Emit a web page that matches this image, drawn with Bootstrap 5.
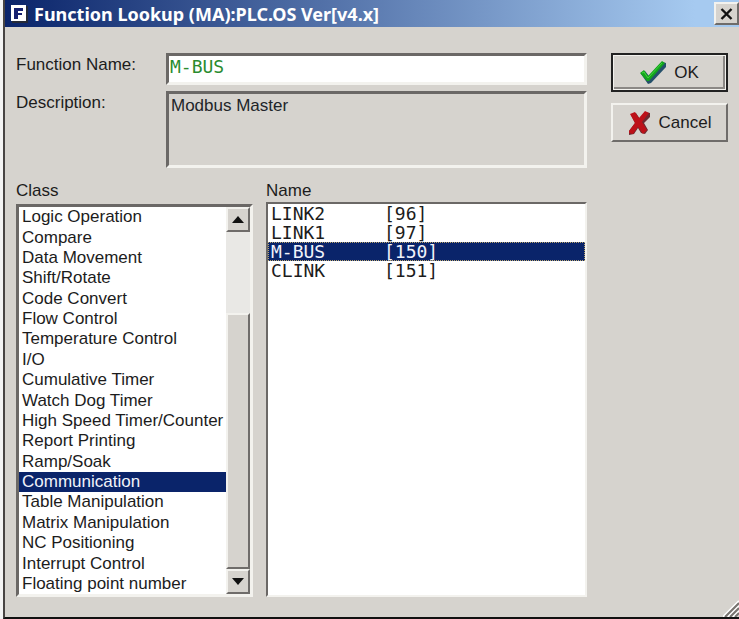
<!DOCTYPE html>
<html lang="en">
<head>
<meta charset="utf-8">
<meta name="viewport" content="width=device-width, initial-scale=1">
<title>Function Lookup</title>
<link href="https://cdn.jsdelivr.net/npm/bootstrap@5.3.0/dist/css/bootstrap.min.css" rel="stylesheet">
<style>
:root{--face:#d6d3ce;--navy:#0a246a;--dark:#6b6866;--light:#f3f2ee}
body{background:#f4f4f4;font-family:"Liberation Sans",Arial,sans-serif;font-size:17px;line-height:20px;color:#1c1c1c}
.dialog-window{background:var(--face);margin-left:3px;border-left:2px solid #484443;border-bottom:2px solid #111}
.title-strip{height:27px;padding-left:5px;background:linear-gradient(90deg,#0a246a,#a6caf0 94%);color:#fff}
.title-text{font:bold 18px/26px "Noto Sans",Tahoma,sans-serif}
.title-icon{margin-right:6px}
.raised{background:var(--face);border:2px solid;border-color:var(--light) #6f6c6a #6f6c6a var(--light);border-radius:0;color:#1c1c1c;padding:0}
.sunken{border:3px solid;border-color:var(--dark) var(--light) var(--light) var(--dark);border-radius:0}
.close-btn{width:25px;height:23px}
.dialog-body{padding:26px 11px 20px 11px;gap:24px}
.form-rows{display:grid;grid-template-columns:150px 1fr;row-gap:6px}
.form-rows label{padding-top:2px}
.name-input{height:32px;padding:0 1px 6px;color:#2a8c2f;background:#fff;font:18px/20px "DejaVu Sans Mono",monospace}
.name-input:focus{color:#2a8c2f;box-shadow:none;border-color:var(--dark) var(--light) var(--light) var(--dark)}
.desc-box{height:77px;padding:2px;background:var(--face);resize:none;font-size:17px;line-height:20px}
.lists{display:grid;grid-template-columns:237px 1fr;column-gap:13px;margin-top:11px}
.list-caption{height:25px;line-height:24px}
.name-caption{height:23px}
.name-frame{border-width:2px}
.pick{border-radius:0;gap:0;background:#fff}
.pick .list-group-item{border:0;background:#fff;color:#1c1c1c;padding:0 3px;white-space:nowrap;min-height:0}
.pick .list-group-item.active{background:var(--navy);color:#f1f3fa;margin:0}
.class-pick .list-group-item{line-height:20px}
.name-pick .list-group-item{font:18px/19px "DejaVu Sans Mono",monospace;height:19px}
.name-pick .list-group-item.active{outline:1px dotted #b9a56f;outline-offset:-1px}
.fn-name{width:113px}
.scroller{width:24px;background:#e9e8e5}
.arrow-btn{height:25px}
.scroll-gap{flex:82 1 0}
.scroll-thumb{flex:255 1 0}
.side-buttons{width:117px;gap:11px}
.side-buttons .btn{height:39px;font-size:17px}
.ok-btn{box-shadow:inset 0 0 0 1px var(--light),inset -3px -3px 0 #8b8885;border:2px solid #222}
.grip{right:0;bottom:0}
</style>
</head>
<body>
<main class="dialog-window min-vh-100 d-flex flex-column position-relative">
  <header class="title-strip d-flex align-items-center">
    <svg width="18" height="20" viewBox="0 0 18 20" aria-hidden="true" class="title-icon"><path d="M2 2h16v17H2z" fill="#252a38"/><path d="M1 1h15v16H1z" fill="#fff"/><path d="M4 4h9v3H8v2h4v2H8v4H4z" fill="#15206f"/></svg>
    <h1 class="title-text m-0 flex-grow-1">Function Lookup (MA):PLC.OS Ver[v4.x]</h1>
    <button type="button" class="btn raised close-btn d-flex align-items-center justify-content-center" aria-label="Close"><svg width="13" height="12" viewBox="0 0 13 12"><path d="M1.500 1l10 10M11.500 1l-10 10" stroke="#111" stroke-width="2.400"/></svg></button>
  </header>
  <form class="dialog-body d-flex flex-grow-1">
    <div class="flex-grow-1 d-flex flex-column">
      <div class="form-rows">
        <label for="fn">Function Name:</label>
        <input id="fn" type="text" class="form-control sunken name-input" value="M-BUS">
        <label for="desc">Description:</label>
        <textarea id="desc" class="form-control sunken desc-box" readonly>Modbus Master</textarea>
      </div>
      <div class="lists flex-grow-1">
        <section class="d-flex flex-column">
          <div class="list-caption" id="class-label">Class</div>
          <div class="sunken d-flex flex-grow-1 bg-white">
            <div class="list-group pick class-pick flex-grow-1" aria-labelledby="class-label">
              <button type="button" class="list-group-item flex-fill text-start">Logic Operation</button>
              <button type="button" class="list-group-item flex-fill text-start">Compare</button>
              <button type="button" class="list-group-item flex-fill text-start">Data Movement</button>
              <button type="button" class="list-group-item flex-fill text-start">Shift/Rotate</button>
              <button type="button" class="list-group-item flex-fill text-start">Code Convert</button>
              <button type="button" class="list-group-item flex-fill text-start">Flow Control</button>
              <button type="button" class="list-group-item flex-fill text-start">Temperature Control</button>
              <button type="button" class="list-group-item flex-fill text-start">I/O</button>
              <button type="button" class="list-group-item flex-fill text-start">Cumulative Timer</button>
              <button type="button" class="list-group-item flex-fill text-start">Watch Dog Timer</button>
              <button type="button" class="list-group-item flex-fill text-start">High Speed Timer/Counter</button>
              <button type="button" class="list-group-item flex-fill text-start">Report Printing</button>
              <button type="button" class="list-group-item flex-fill text-start">Ramp/Soak</button>
              <button type="button" class="list-group-item flex-fill text-start active">Communication</button>
              <button type="button" class="list-group-item flex-fill text-start">Table Manipulation</button>
              <button type="button" class="list-group-item flex-fill text-start">Matrix Manipulation</button>
              <button type="button" class="list-group-item flex-fill text-start">NC Positioning</button>
              <button type="button" class="list-group-item flex-fill text-start">Interrupt Control</button>
              <button type="button" class="list-group-item flex-fill text-start">Floating point number</button>
            </div>
            <div class="scroller d-flex flex-column flex-shrink-0">
              <button type="button" class="btn raised arrow-btn d-flex align-items-center justify-content-center" aria-label="Scroll up"><svg width="12" height="7" viewBox="0 0 12 7"><path d="M0 7l6-7 6 7z" fill="#111"/></svg></button>
              <div class="scroll-gap"></div>
              <div class="scroll-thumb raised"></div>
              <button type="button" class="btn raised arrow-btn d-flex align-items-center justify-content-center" aria-label="Scroll down"><svg width="12" height="7" viewBox="0 0 12 7"><path d="M0 0l6 7 6-7z" fill="#111"/></svg></button>
            </div>
          </div>
        </section>
        <section class="d-flex flex-column">
          <div class="list-caption name-caption" id="name-label">Name</div>
          <div class="sunken name-frame flex-grow-1 bg-white">
            <div class="list-group pick name-pick" aria-labelledby="name-label">
              <button type="button" class="list-group-item d-flex text-start"><span class="fn-name">LINK2</span><span>[96]</span></button>
              <button type="button" class="list-group-item d-flex text-start"><span class="fn-name">LINK1</span><span>[97]</span></button>
              <button type="button" class="list-group-item d-flex text-start active"><span class="fn-name">M-BUS</span><span>[150]</span></button>
              <button type="button" class="list-group-item d-flex text-start"><span class="fn-name">CLINK</span><span>[151]</span></button>
            </div>
          </div>
        </section>
      </div>
    </div>
    <div class="side-buttons d-flex flex-column flex-shrink-0">
      <button type="submit" class="btn raised ok-btn d-flex align-items-center justify-content-center gap-2"><svg width="26" height="24" viewBox="0 0 26 24"><path d="M1 13l4-3 4 5L22 1l4 1v4L11 22l-3 1z" fill="#24506a"/><path d="M0 12l4-3 4 6L22 0l3 2L9 20H7z" fill="#12a51d"/><path d="M2 12l2-1 4 6L22 2" fill="none" stroke="#42d53c" stroke-width="1"/></svg>OK</button>
      <button type="button" class="btn raised d-flex align-items-center justify-content-center gap-2"><svg width="23" height="24" viewBox="0 0 23 24"><path d="M3 4l5-2 4 6 5-7 5 1v4l-6 6 4 7-3 4-4-1-3-5-4 6-5 1v-4l6-8z" fill="#6d2a30"/><path d="M2 3l5-2 4 6 6-7 4 2-7 9 5 8-4 4-5-7-5 7-4-1v-2l6-8z" fill="#bd1119"/></svg>Cancel</button>
    </div>
  </form>
  <svg class="grip position-absolute" width="16" height="17" viewBox="0 0 16 17" aria-hidden="true"><path d="M0 17L16 1M5 17L16 6M10 17l6-6" stroke="#fff" stroke-width="2"/><path d="M2 17L16 3M7 17l9-9M12 17l4-4" stroke="#77736f" stroke-width="2"/></svg>
</main>
<script src="https://cdn.jsdelivr.net/npm/bootstrap@5.3.0/dist/js/bootstrap.bundle.min.js"></script>
</body>
</html>
